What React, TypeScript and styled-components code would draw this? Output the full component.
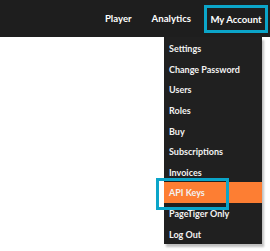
import React from 'react';
import styled, { createGlobalStyle } from 'styled-components';

const GlobalStyle = createGlobalStyle`
	html, body {
		margin: 0;
		padding: 0;
		background: #ffffff;
		font-family: Lato, "Open Sans", sans-serif;
	}
	* {
		box-sizing: border-box;
	}
`;

const Root = styled.div`
	width: 270px;
	height: 251px;
	position: relative;
	overflow: hidden;
	background: #ffffff;
`;

const TopBar = styled.nav`
	height: 37px;
	background-color: #1e1e1e;
	display: flex;
	justify-content: flex-end;
	align-items: center;
	padding-right: 2px;
`;

const NavLink = styled.a`
	color: #ffffff;
	font-size: 9.6px;
	font-weight: 700;
	padding: 0 10px;
	text-decoration: none;
	white-space: nowrap;
`;

const AccountLink = styled(NavLink)`
	position: relative;
	width: 64px;
	height: 28px;
	margin-left: 3px;
	margin-top: 1px;
	padding: 0;
	display: flex;
	align-items: center;
	justify-content: center;
	border: 3px solid #0ba5c9;
`;

const Menu = styled.ul`
	position: absolute;
	top: 37px;
	right: 8px;
	width: 98px;
	margin: 0;
	padding: 1px 0 0 0;
	list-style: none;
	background-color: #202020;
	box-shadow: 2px 3px 2px rgba(0, 0, 0, 0.25);
`;

const MenuItem = styled.li<{ $active?: boolean }>`
	position: relative;
	height: 20.6px;
	display: flex;
	align-items: center;
	padding: 1px 0 0 5px;
	color: #f2f2f2;
	font-size: 9px;
	font-weight: 700;
	white-space: nowrap;
	background-color: ${props => (props.$active ? '#fd7e33' : 'transparent')};
`;

// annotation frame drawn over the highlighted row
const Highlight = styled.span`
	position: absolute;
	left: -8px;
	top: -4px;
	width: 73px;
	height: 32px;
	border: 3px solid #0ba5c9;
`;

const items = [
	'Settings',
	'Change Password',
	'Users',
	'Roles',
	'Buy',
	'Subscriptions',
	'Invoices',
	'API Keys',
	'PageTiger Only',
	'Log Out',
];

const App: React.FunctionComponent = () => {
	return (
		<Root>
			<GlobalStyle />
			<TopBar>
				<NavLink>Player</NavLink>
				<NavLink>Analytics</NavLink>
				<AccountLink>My Account</AccountLink>
			</TopBar>
			<Menu>
				{items.map(item => (
					<MenuItem key={item} $active={item === 'API Keys'}>
						{item}
						{item === 'API Keys' && <Highlight />}
					</MenuItem>
				))}
			</Menu>
		</Root>
	);
};

export default App;
